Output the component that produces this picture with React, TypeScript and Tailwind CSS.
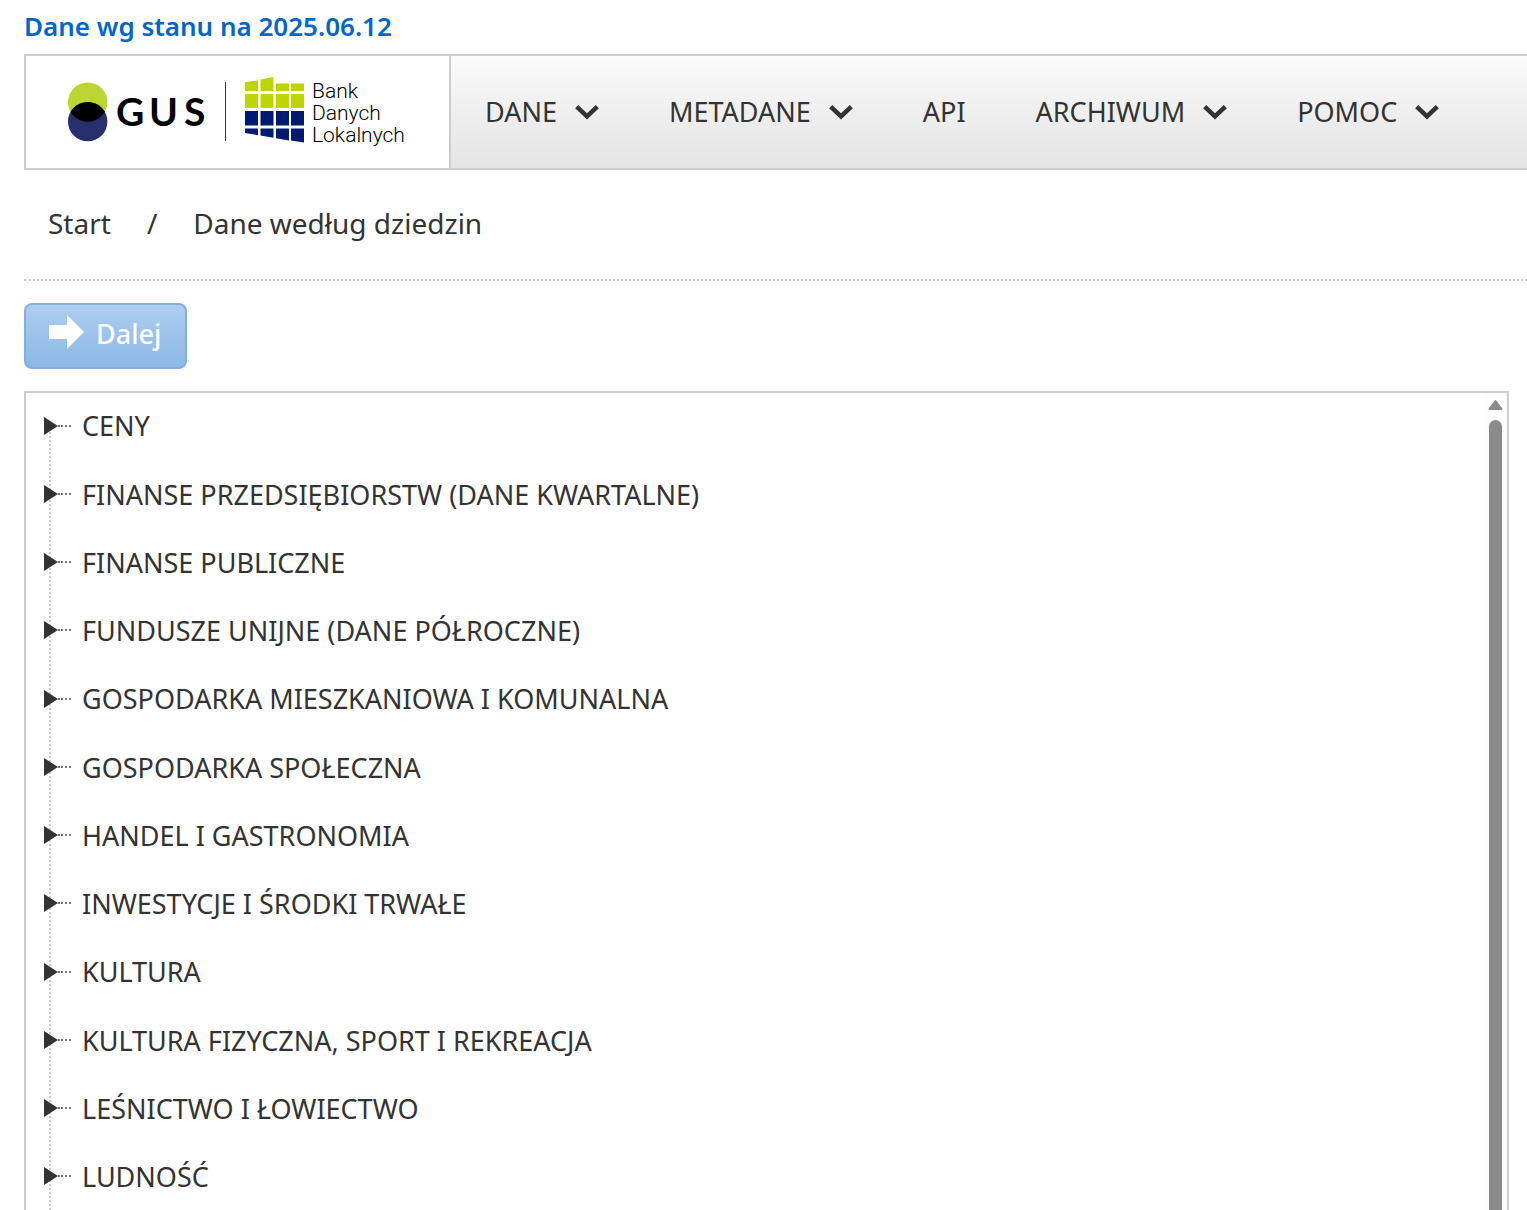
import React from 'react';

const menu = [
  { label: 'DANE', dropdown: true },
  { label: 'METADANE', dropdown: true },
  { label: 'API', dropdown: false },
  { label: 'ARCHIWUM', dropdown: true },
  { label: 'POMOC', dropdown: true },
];

const categories = [
  'CENY',
  'FINANSE PRZEDSIĘBIORSTW (DANE KWARTALNE)',
  'FINANSE PUBLICZNE',
  'FUNDUSZE UNIJNE (DANE PÓŁROCZNE)',
  'GOSPODARKA MIESZKANIOWA I KOMUNALNA',
  'GOSPODARKA SPOŁECZNA',
  'HANDEL I GASTRONOMIA',
  'INWESTYCJE I ŚRODKI TRWAŁE',
  'KULTURA',
  'KULTURA FIZYCZNA, SPORT I REKREACJA',
  'LEŚNICTWO I ŁOWIECTWO',
  'LUDNOŚĆ',
];

export default function App() {
  return (
    <div className="flex h-screen flex-col overflow-hidden bg-white pl-6 font-['Noto_Sans',sans-serif] text-[27px] text-[#333]">
      <p className="pt-2 text-[26px] leading-[36px] font-semibold text-[#0066cc]">Dane wg stanu na 2025.06.12</p>

      <header className="mt-[10px] flex shrink-0 border-2 border-r-0 border-[#ccc]">
        <a href="#" className="flex w-[425px] shrink-0 items-start border-r-2 border-[#ccc] py-5 pl-[42px]">
          <Logo />
          <span className="pt-1 pl-[7px] font-['Roboto',sans-serif] text-[21px] leading-[22px] font-light text-black">
            Bank<br />Danych<br />Lokalnych
          </span>
        </a>
        <nav className="flex flex-1 items-center gap-[70px] bg-linear-to-b from-[#fafafa] to-[#e4e4e4] pl-[34px]">
          {menu.map(item => (
            <button key={item.label} type="button" className="flex shrink-0 items-center gap-[18px]">
              {item.label}
              {item.dropdown && <Chevron />}
            </button>
          ))}
        </nav>
      </header>

      <nav aria-label="Breadcrumb" className="shrink-0 border-b-2 border-dotted border-[#ccc] pt-[33px] pb-9 pl-6 text-[28px] leading-[40px]">
        <ol className="flex">
          <li><a href="#">Start</a></li>
          <li aria-hidden="true" className="px-9">/</li>
          <li><a href="#">Dane według dziedzin</a></li>
        </ol>
      </nav>

      <button
        type="button"
        className="mt-[22px] flex h-[66px] shrink-0 items-center gap-[11px] self-start rounded-lg border-2 border-[#86aedb] bg-linear-to-b from-[#aecdf0] to-[#8ab8e6] pr-6 pb-1 pl-[23px] font-medium text-white"
      >
        <svg width="36" height="34" viewBox="0 0 36 34" fill="currentColor" className="mb-1">
          <path d="M0 10h18V0l17 17-17 17V24H0z" />
        </svg>
        Dalej
      </button>

      <main className="mt-[22px] mr-[18px] flex min-h-0 flex-1 overflow-hidden border-2 border-b-0 border-[#ccc]">
        <ul className="relative flex-1">
          <li aria-hidden="true" className="absolute top-8 bottom-0 left-[23px] border-l-2 border-dotted border-[#ccc]" />
          {categories.map(name => (
            <Category key={name} name={name} />
          ))}
        </ul>
        <Scrollbar />
      </main>
    </div>
  );
}

function Category({ name }: { name: string }) {
  return (
    <li className="relative h-[68px] nth-[4n+2]:h-[69px]">
      <button type="button" className="flex h-full items-center pb-1 pl-[18px]">
        <svg width="14" height="18" viewBox="0 0 14 18" fill="currentColor">
          <path d="M0 0 14 9 0 18z" />
        </svg>
        <span className="w-[13px] border-t-2 border-dotted border-[#777]" />
        <span className="pt-[2px] pl-[11px]">{name}</span>
      </button>
    </li>
  );
}

function Scrollbar() {
  return (
    <div aria-hidden="true" className="flex w-[23px] flex-col items-center gap-[10px] bg-[#fcfcfc] pt-[6px]">
      <svg width="15" height="11" viewBox="0 0 15 11" className="shrink-0">
        <path d="M7.5 2 13.5 10H1.5z" fill="#8b8b8b" stroke="#8b8b8b" strokeWidth="2" strokeLinejoin="round" />
      </svg>
      <div className="w-[13px] flex-1 rounded-t-full bg-[#8b8b8b]" />
    </div>
  );
}

function Chevron() {
  return (
    <svg width="24" height="16" viewBox="0 0 24 16" fill="none" stroke="currentColor" strokeWidth="4.5">
      <path d="M1.7 2.6 12 12.4 22.3 2.6" />
    </svg>
  );
}

function Logo() {
  return (
    <svg width="237" height="72" viewBox="0 0 237 72" className="shrink-0">
      <defs>
        <clipPath id="upper-circle">
          <circle cx="19.7" cy="26.1" r="19.7" />
        </clipPath>
      </defs>
      <circle cx="19.7" cy="26.1" r="19.7" fill="#bcd532" />
      <circle cx="19.7" cy="45.6" r="19.7" fill="#272e6c" />
      <circle cx="19.7" cy="45.6" r="19.7" fill="#000" clipPath="url(#upper-circle)" />
      <text y="50" fontSize="39" className="font-['Lato',sans-serif] font-bold" fill="#000">
        <tspan x="48">G</tspan>
        <tspan x="81">U</tspan>
        <tspan x="116">S</tspan>
      </text>
      <path d="M157.5 6v59" stroke="#333" />
      <g fill="#bed600">
        <path d="M177 6.3 190 4.3V15H177z" />
        <path d="M192.5 3.6 205.5 1V15H192.5z" />
        <path d="M208 7.5h13V15h-13z" />
        <path d="M223 7.5h13V15h-13z" />
        <path d="M177 18h13v14h-13zM192.5 18h13v14h-13zM208 18h13v14h-13zM223 18h13v14h-13z" />
      </g>
      <g fill="#001a72">
        <path d="M177 35h13v14.5h-13zM192.5 35h13v14.5h-13zM208 35h13v14.5h-13zM223 35h13v14.5h-13z" />
        <path d="M177 52.5h13v6.7L177 57zM192.5 52.5h13v9.3l-13-2.2zM208 52.5h13v11.9l-13-2.2zM223 52.5h13v13.9l-13-2z" />
      </g>
    </svg>
  );
}
